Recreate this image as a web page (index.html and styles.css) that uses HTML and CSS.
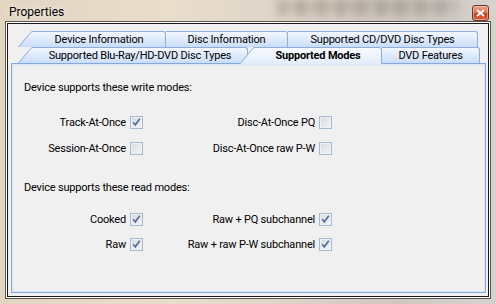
FILE: index.html
```html
<!DOCTYPE html>
<html>

<head>
    <title>Properties</title>
    <link rel="stylesheet" href="styles.css">
</head>

<body>
    <!-- shared gradients for the slanted tab edges -->
    <svg class="defs" width="0" height="0">
        <defs>
            <linearGradient id="tabFill" x1="0" y1="0" x2="0" y2="1">
                <stop offset="0" stop-color="#f3f8fe" />
                <stop offset="1" stop-color="#c9ddf7" />
            </linearGradient>
            <linearGradient id="tabFillOn" x1="0" y1="0" x2="0" y2="1">
                <stop offset="0" stop-color="#f8fbff" />
                <stop offset="1" stop-color="#e2edfb" />
            </linearGradient>
        </defs>
    </svg>

    <div class="window">
        <div class="titlebar">
            <span class="title">Properties</span>
            <div class="glass-blur"></div>
            <div class="close">
                <svg width="9" height="8" viewBox="0 0 9 8">
                    <path d="M1 1 L8 7 M8 1 L1 7" stroke="#ffffff" stroke-width="2" />
                </svg>
            </div>
        </div>

        <div class="client">
            <div class="tabs">
                <div class="tab-row">
                    <svg class="slant" width="15" height="16">
                        <path d="M0 16 L13 1 Q14 0 15 0 L15 16 Z" fill="url(#tabFill)" />
                        <path d="M0.5 16 L13 1.2 Q13.8 0.5 15 0.5" stroke="#8eaedb" fill="none" />
                    </svg>
                    <div class="tab w-device">Device Information</div>
                    <div class="tab w-disc">Disc Information</div>
                    <div class="tab w-cddvd">Supported CD/DVD Disc Types</div>
                </div>
                <div class="tab-row">
                    <svg class="slant" width="15" height="16">
                        <path d="M0 16 L13 1 Q14 0 15 0 L15 16 Z" fill="url(#tabFill)" />
                        <path d="M0.5 16 L13 1.2 Q13.8 0.5 15 0.5" stroke="#8eaedb" fill="none" />
                    </svg>
                    <div class="tab w-bluray">Supported Blu-Ray/HD-DVD Disc Types</div>
                    <svg class="slant slant-on" width="15" height="17">
                        <path d="M0 17 L13 1 Q14 0 15 0 L15 17 Z" fill="url(#tabFillOn)" />
                        <path d="M0.5 16.5 L13 1.2 Q13.8 0.5 15 0.5" stroke="#8eaedb" fill="none" />
                    </svg>
                    <div class="tab active w-modes">Supported Modes</div>
                    <div class="tab w-dvd">DVD Features</div>
                </div>
            </div>

            <div class="panel">
                <div class="heading">Device supports these write modes:</div>
                <div class="options write">
                    <label class="opt">Track-At-Once <span class="cb on"><svg width="11" height="11" viewBox="0 0 11 11"><path d="M2.2 5.2 L4.3 7.8 L8.8 1.8" stroke="#51709a" stroke-width="1.7" fill="none" /></svg></span></label>
                    <label class="opt">Disc-At-Once PQ <span class="cb"></span></label>
                    <label class="opt">Session-At-Once <span class="cb"></span></label>
                    <label class="opt">Disc-At-Once raw P-W <span class="cb"></span></label>
                </div>

                <div class="heading second">Device supports these read modes:</div>
                <div class="options read">
                    <label class="opt">Cooked <span class="cb on"><svg width="11" height="11" viewBox="0 0 11 11"><path d="M2.2 5.2 L4.3 7.8 L8.8 1.8" stroke="#51709a" stroke-width="1.7" fill="none" /></svg></span></label>
                    <label class="opt">Raw + PQ subchannel <span class="cb on"><svg width="11" height="11" viewBox="0 0 11 11"><path d="M2.2 5.2 L4.3 7.8 L8.8 1.8" stroke="#51709a" stroke-width="1.7" fill="none" /></svg></span></label>
                    <label class="opt">Raw <span class="cb on"><svg width="11" height="11" viewBox="0 0 11 11"><path d="M2.2 5.2 L4.3 7.8 L8.8 1.8" stroke="#51709a" stroke-width="1.7" fill="none" /></svg></span></label>
                    <label class="opt">Raw + raw P-W subchannel <span class="cb on"><svg width="11" height="11" viewBox="0 0 11 11"><path d="M2.2 5.2 L4.3 7.8 L8.8 1.8" stroke="#51709a" stroke-width="1.7" fill="none" /></svg></span></label>
                </div>
            </div>
        </div>
    </div>
</body>

</html>
```

FILE: styles.css
```css
* {
    margin: 0;
    padding: 0;
    box-sizing: border-box;
}

body {
    width: 496px;
    height: 304px;
    overflow: hidden;
    font-family: 'Roboto', 'Lato', sans-serif;
    font-size: 11px;
    letter-spacing: -0.2px;
    color: #000000;
    background: linear-gradient(90deg, #e2d5c2 0%, #e9ddcc 35%, #ddd4c8 58%, #cfc8c0 80%, #d6d2ce 100%);
}

.defs {
    display: block;
    width: 0;
    height: 0;
}

.window {
    height: 304px;
    display: flex;
    flex-direction: column;
}

/* title bar */

.titlebar {
    height: 23px;
    display: flex;
    align-items: flex-start;
    padding-left: 9px;
    overflow: hidden;
}

.title {
    padding-top: 5px;
    line-height: 15px;
    font-size: 12px;
    letter-spacing: 0;
    text-shadow: 0 0 6px rgba(255, 255, 255, 0.9);
}

/* blurred desktop seen through the glass */
.glass-blur {
    margin-left: auto;
    margin-right: 14px;
    width: 180px;
    height: 16px;
    background:
        repeating-linear-gradient(90deg, rgba(60, 50, 40, 0.22) 0 6px, rgba(60, 50, 40, 0.04) 9px 16px, rgba(60, 50, 40, 0.22) 20px),
        linear-gradient(rgba(60, 50, 40, 0.12), rgba(60, 50, 40, 0));
    filter: blur(4px);
}

.close {
    width: 17px;
    height: 16px;
    margin-top: 5px;
    margin-right: 7px;
    border: 1px solid #6b3424;
    border-radius: 3px;
    background: linear-gradient(#eda58d 0%, #d9694b 50%, #c2391d 55%, #d5683f 100%);
    box-shadow: inset 0 0 0 1px rgba(255, 220, 200, 0.5);
    display: flex;
    align-items: center;
    justify-content: center;
}

/* client area */

.client {
    flex: 1;
    margin: 0 7px 7px 7px;
    border: 1px solid #1a1a1a;
    box-shadow: 0 0 0 1px #ffffff, 0 0 0 2px #5a5550;
    background: #f0f0f0;
    padding: 7px 2px 3px 3px;
    display: flex;
    flex-direction: column;
}

.tabs {
    padding-left: 7px;
    position: relative;
    z-index: 1;
}

.tab-row {
    display: flex;
    height: 16px;
}

.slant {
    flex: none;
}

.tab {
    height: 16px;
    display: flex;
    align-items: center;
    justify-content: center;
    line-height: 16px;
    white-space: nowrap;
    border-top: 1px solid #8eaedb;
    border-right: 1px solid #8eaedb;
    border-top-right-radius: 3px;
    background: linear-gradient(#f3f8fe, #c9ddf7);
}

.tab.active {
    height: 17px;
    font-weight: bold;
    background: linear-gradient(#f8fbff, #e2edfb);
}

.slant-on {
    margin-left: -8px;
}

.w-device { width: 133px; }
.w-disc { width: 122px; }
.w-cddvd { width: 190px; }
.w-bluray { width: 215px; }
.w-modes { width: 127px; }
.w-dvd { width: 98px; }

/* tab page */

.panel {
    flex: 1;
    border: 1px solid #84a9dc;
    box-shadow: inset 0 0 0 1px #dce7f6;
    background: linear-gradient(#e2edfb 0, #f0f0f0 4px);
    padding: 16px 12px 0 12px;
}

.heading {
    line-height: 15px;
}

.heading.second {
    margin-top: 25px;
}

.options {
    display: grid;
    grid-template-columns: 119px 189px;
}

.options.write {
    margin-top: 21px;
    row-gap: 13px;
}

.options.read {
    margin-top: 18px;
    row-gap: 12px;
}

.opt {
    height: 13px;
    line-height: 13px;
    display: flex;
    align-items: center;
    justify-content: flex-end;
    gap: 4px;
    white-space: nowrap;
}

.cb {
    width: 13px;
    height: 13px;
    flex: none;
    border: 1px solid #a7bad5;
    background: linear-gradient(135deg, #d9dadc, #f5f5f5);
    box-shadow: inset 0 0 0 1px #eef1f5;
    display: flex;
    align-items: center;
    justify-content: center;
}
```
